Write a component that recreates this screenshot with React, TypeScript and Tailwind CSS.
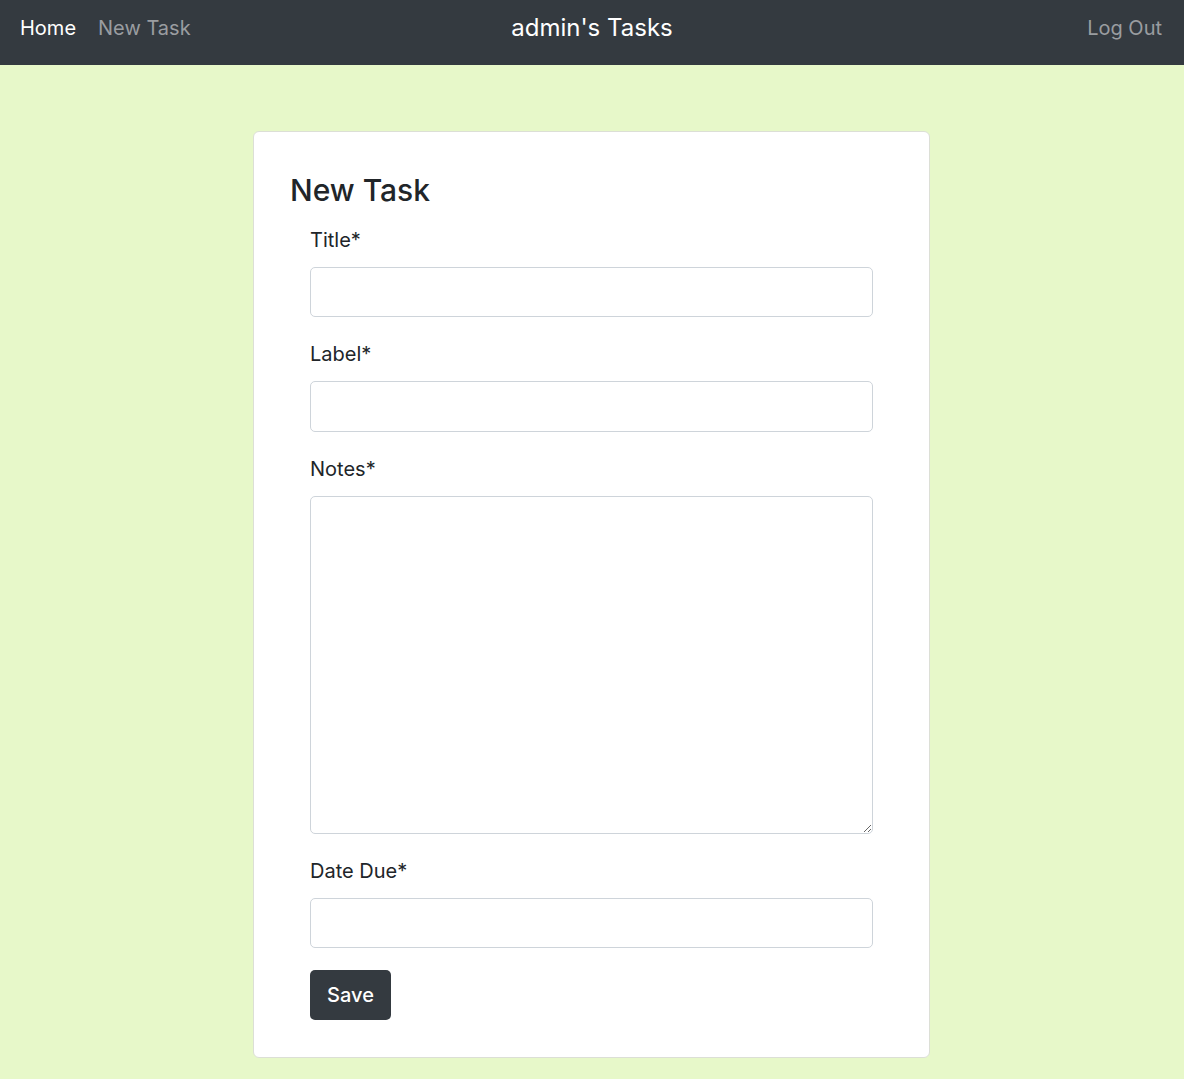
import React from "react";

export default function App() {
  const font = { fontFamily: "Inter, 'Liberation Sans', sans-serif" };
  const inputCls =
    "block w-full h-[50.4px] rounded-[5px] border border-[#ced4da] bg-white px-4 text-[20px] text-[#212529] outline-none";
  return (
    <div className="min-h-[1079px] bg-[#e7f8c9] text-[#212529]" style={font}>
      <nav className="h-[65px] bg-[#343a40] flex items-center justify-between px-5 pb-[10px] relative">
        <div className="flex items-center gap-[22px] text-[20px]">
          <a className="text-white">Home</a>
          <a className="text-[#9a9da0]">New Task</a>
        </div>
        <div className="absolute left-1/2 top-[10px] -translate-x-1/2 text-white text-[24px] leading-[36px]">admin's Tasks</div>
        <a className="text-[#9a9da0] text-[20px] mr-[2px]">Log Out</a>
      </nav>
      <div className="pt-[66px] pb-[22px] pr-[1px] flex justify-center">
        <div className="w-[677px] bg-white border border-[#dcdfd6] rounded-[6px] px-9 pt-[40px] pb-[37px]">
          <h2 className="text-[30px] leading-[36px] font-medium mb-[17px]">New Task</h2>
          <form className="px-5 flex flex-col">
            <label className="text-[20px] leading-[30px] mb-3">Title*</label>
            <input className={inputCls} />
            <label className="text-[20px] leading-[30px] mb-3 mt-[22px]">Label*</label>
            <input className={inputCls} />
            <label className="text-[20px] leading-[30px] mb-3 mt-[22px]">Notes*</label>
            <textarea className="block w-full h-[338px] rounded-[5px] border border-[#ced4da] bg-white px-4 py-2 text-[20px] outline-none" />
            <label className="text-[20px] leading-[30px] mb-3 mt-[22px]">Date Due*</label>
            <input className={inputCls} />
            <div className="mt-[22px]">
              <button type="button" className="h-[50px] w-[81px] rounded-[5px] bg-[#343a40] text-white text-[20px] font-medium">
                Save
              </button>
            </div>
          </form>
        </div>
      </div>
    </div>
  );
}
